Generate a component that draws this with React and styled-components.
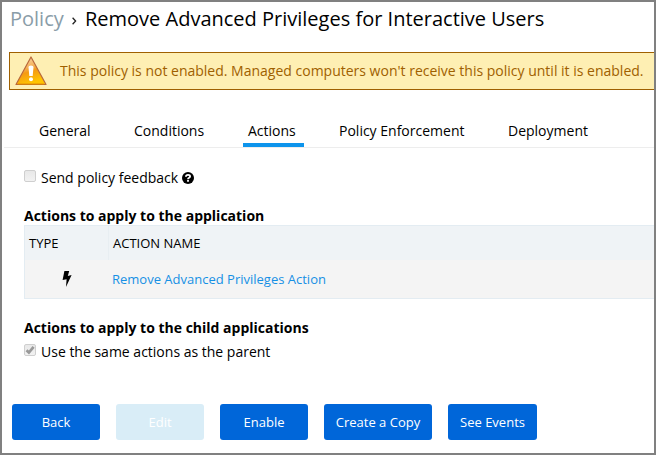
import React from "react";
import styled, { createGlobalStyle } from "styled-components";

const GlobalStyle = createGlobalStyle`
  * { box-sizing: border-box; }
  body { margin: 0; background: #fff; overflow: hidden; }
`;

const Frame = styled.main`
  width: 656px;
  height: 455px;
  border: 2px solid #808080;
  background: #fff;
  color: #000;
  font-family: "Open Sans", "Noto Sans", sans-serif;
  font-size: 14px;
  line-height: 20px;
  white-space: nowrap;
  overflow: hidden;
`;

const Breadcrumb = styled.header`
  display: flex;
  align-items: center;
  height: 34px;
  padding-left: 8px;
  font-size: 20px;
  line-height: 28px;
`;

const Parent = styled.span`
  width: 61px;
  color: #8a9da8;
`;

const Chevron = styled.svg`
  width: 6px;
  height: 8px;
  margin-right: 8px;
  margin-top: 3px;
`;

const Title = styled.h1`
  margin: 0;
  font-size: 20px;
  font-weight: 400;
`;

const Alert = styled.section`
  display: flex;
  align-items: center;
  height: 38px;
  margin: 16px 0 0 7px;
  padding-left: 5px;
  border: 1px solid #9f6000;
  border-right: 0;
  background: #feefb3;
  color: #9f6000;
`;

const WarningIcon = styled.svg`
  width: 32px;
  height: 30px;
  margin-right: 13px;
`;

const Tabs = styled.nav`
  display: flex;
  height: 58px;
  margin-left: 2px;
  padding: 31px 0 0 30px;
  border-bottom: 1px solid #ededed;
`;

const Tab = styled.a`
  width: ${(p) => p.$width}px;
  height: 26px;
  margin-right: ${(p) => p.$gap || 0}px;
  padding-left: 5px;
  border-bottom: 4px solid ${(p) => (p.$active ? "#0d94ec" : "transparent")};
`;

const Content = styled.div`
  padding-left: 22px;
`;

const CheckRow = styled.label`
  display: flex;
  align-items: center;
  height: 20px;
  margin-top: ${(p) => p.$top}px;
`;

const Box = styled.span`
  display: flex;
  width: 12px;
  height: 12px;
  margin: 0 5px 4px 0;
  border: 1px solid #cfcfcf;
  border-radius: 2px;
  background: linear-gradient(#e8e8e8, #f2f2f2);
`;

const HelpIcon = styled.svg`
  width: 12px;
  height: 12px;
  margin-left: 4px;
`;

const Heading = styled.h2`
  margin: ${(p) => p.$top}px 0 0;
  font-size: 14px;
  line-height: 18px;
  font-weight: 700;
`;

const Table = styled.div`
  border: 1px solid #e3ecf2;
  border-right: 0;
`;

const TableRow = styled.div`
  display: grid;
  grid-template-columns: 84px 1fr;
  height: ${(p) => p.$height}px;
  background: ${(p) => (p.$head ? "#eff3f6" : "#f4f4f4")};
`;

const Cell = styled.div`
  display: flex;
  align-items: center;
  padding-left: ${(p) => p.$left}px;
  border-right: ${(p) => (p.$divided ? "1px solid #e8eef2" : "0")};
  font-size: 13px;
`;

const ActionLink = styled.a`
  color: #1690e4;
`;

const ButtonBar = styled.footer`
  display: flex;
  gap: 16px;
  padding: 42px 0 0 10px;
`;

const Button = styled.button`
  width: ${(p) => p.$width || 88}px;
  height: 36px;
  padding: 0 0 1px;
  border: 0;
  border-radius: 3px;
  background: #0066d9;
  color: #fff;
  font: 13px "Open Sans", "Noto Sans", sans-serif;
  &:disabled { background: #d9edf7; color: #fff; }
`;

export default function App() {
  return (
    <>
      <GlobalStyle />
      <Frame>
        <Breadcrumb>
          <Parent>Policy</Parent>
          <Chevron viewBox="0 0 6 8">
            <path d="M1.6 .8 4.6 4 1.6 7.2" fill="none" stroke="#222" strokeWidth="1.3" />
          </Chevron>
          <Title>Remove Advanced Privileges for Interactive Users</Title>
        </Breadcrumb>
        <Alert>
          <WarningIcon viewBox="0 0 32 30">
            <defs>
              <linearGradient id="amber" x1="0" y1="0" x2="0.35" y2="1">
                <stop offset="0" stopColor="#fbe0b8" />
                <stop offset=".45" stopColor="#f5b35c" />
                <stop offset=".62" stopColor="#f59a13" />
                <stop offset="1" stopColor="#ffc400" />
              </linearGradient>
            </defs>
            <path d="M16 1 31 28.5H1Z" fill="url(#amber)" stroke="#b9683c" strokeWidth="1.2" strokeLinejoin="round" />
            <path d="M3 28.2H29" stroke="#d98308" strokeWidth="1.2" />
            <path d="M13.5 11q0-1.5 2.5-1.5t2.5 1.5l-.8 9h-3.4Z" fill="#fff" />
            <circle cx="16" cy="23.2" r="2" fill="#fff" />
          </WarningIcon>
          <span>This policy is not enabled. Managed computers won't receive this policy until it is enabled.</span>
        </Alert>
        <Tabs>
          <Tab $width={61} $gap={34}>General</Tab>
          <Tab $width={80} $gap={34}>Conditions</Tab>
          <Tab $width={61} $gap={30} $active>Actions</Tab>
          <Tab $width={135} $gap={34}>Policy Enforcement</Tab>
          <Tab $width={90}>Deployment</Tab>
        </Tabs>
        <Content>
          <CheckRow $top={20}>
            <Box />
            <span>Send policy feedback</span>
            <HelpIcon viewBox="0 0 12 12">
              <circle cx="6" cy="6" r="6" />
              <path d="M3.9 4.7Q4 2.9 6 2.9T8.1 4.5Q8.1 5.4 6.8 6 6 6.4 6 7.2" fill="none" stroke="#fff" strokeWidth="1.8" />
              <path d="M5.1 8.1h1.8v1.7H5.1z" fill="#fff" />
            </HelpIcon>
          </CheckRow>
          <Heading $top={19}>Actions to apply to the application</Heading>
          <Table>
            <TableRow $head $height={34}>
              <Cell $left={4} $divided>TYPE</Cell>
              <Cell $left={4}>ACTION NAME</Cell>
            </TableRow>
            <TableRow $height={38}>
              <Cell $left={37}>
                <svg width="10" height="16" viewBox="0 0 10 16">
                  <path d="M2.4 0H7.2L5.8 4.9 9.6 4.1 4 16 4.6 8.2.6 9.1Z" />
                </svg>
              </Cell>
              <Cell $left={3}><ActionLink>Remove Advanced Privileges Action</ActionLink></Cell>
            </TableRow>
          </Table>
          <Heading $top={20}>Actions to apply to the child applications</Heading>
          <CheckRow $top={5}>
            <Box>
              <svg width="10" height="10" viewBox="0 0 10 10">
                <path d="M1.5 5.2 3.9 7.5 8.6 1.8" fill="none" stroke="#999" strokeWidth="2.7" />
              </svg>
            </Box>
            <span>Use the same actions as the parent</span>
          </CheckRow>
        </Content>
        <ButtonBar>
          <Button>Back</Button>
          <Button disabled>Edit</Button>
          <Button>Enable</Button>
          <Button $width={108}>Create a Copy</Button>
          <Button $width={89}>See Events</Button>
        </ButtonBar>
      </Frame>
    </>
  );
}
